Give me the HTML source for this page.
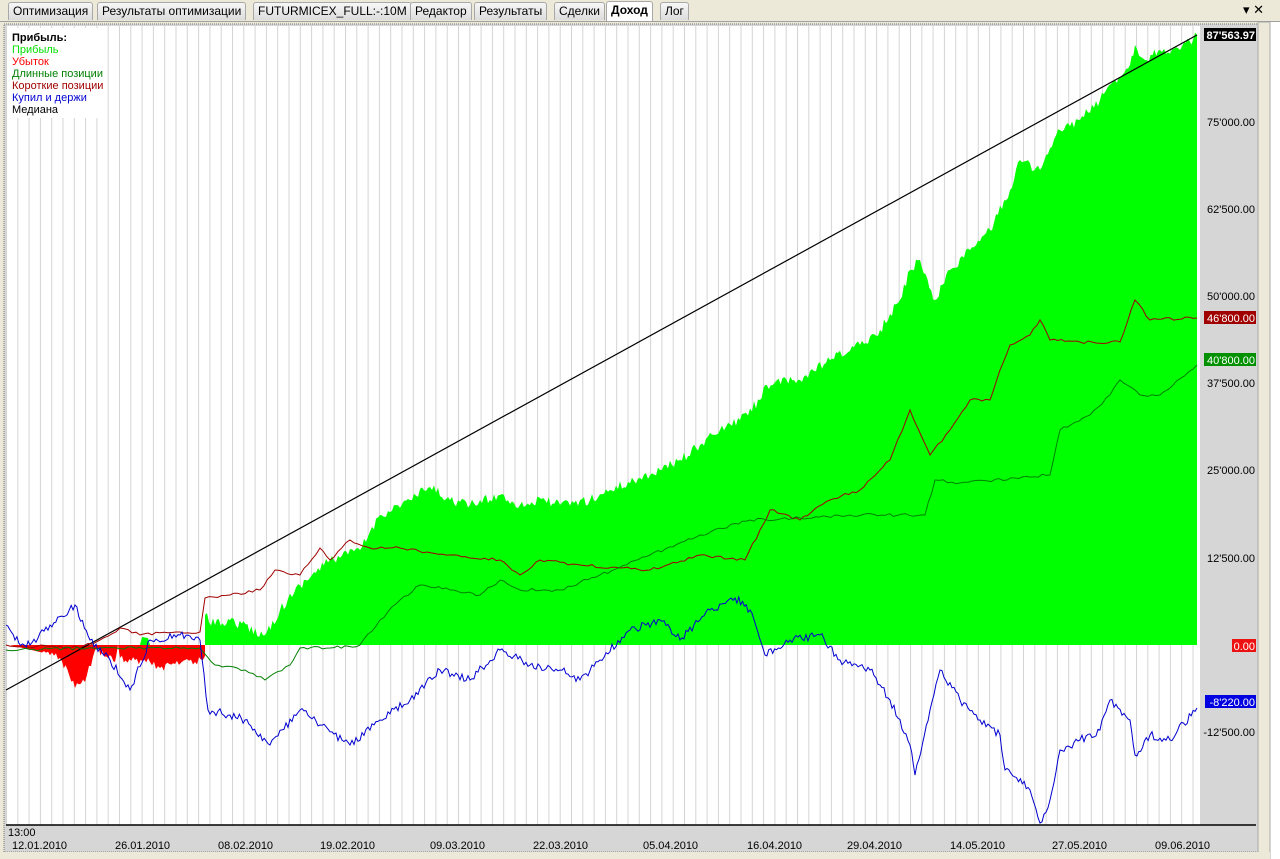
<!DOCTYPE html>
<html><head><meta charset="utf-8"><style>
body{margin:0;width:1280px;height:859px;overflow:hidden;background:#fff;font-family:"Liberation Sans",Tahoma,sans-serif}
.top{position:absolute;left:0;top:0;width:1280px;height:21px;background:#ece9d8;border-bottom:1px solid #a0a0a0}
.tab{position:absolute;top:2px;height:17px;font-size:12px;line-height:17px;padding:0 4px;border:1px solid #a8a8a8;border-bottom:none;background:linear-gradient(#f7f7f7,#dcdcdc);color:#000;border-radius:3px 3px 0 0}
.tab.a{background:#fff;font-weight:bold;top:1px;height:19px}
</style></head><body>
<div class="top">
<div class="tab" style="left:8px">Оптимизация</div>
<div class="tab" style="left:97px">Результаты оптимизации</div>
<div class="tab" style="left:253px">FUTURMICEX_FULL:-:10M</div>
<div class="tab" style="left:410px">Редактор</div>
<div class="tab" style="left:474px">Результаты</div>
<div class="tab" style="left:554px">Сделки</div>
<div class="tab a" style="left:606px">Доход</div>
<div class="tab" style="left:660px">Лог</div>
<div style="position:absolute;left:1243px;top:2px;font-size:13px">▾ ✕</div>
</div>
<svg style="position:absolute;left:0;top:22px" width="1280" height="837" viewBox="0 22 1280 837" font-family="Liberation Sans, sans-serif">
<defs><pattern id="g" x="6" y="0" width="11.3" height="10" patternUnits="userSpaceOnUse"><line x1="0.5" y1="0" x2="0.5" y2="10" stroke="#d4d4d4"/></pattern></defs>
<rect x="0" y="22" width="1270" height="837" fill="#ece9d8"/>
<rect x="4" y="24" width="1254" height="828" fill="#d6d6d6" stroke="#777" stroke-dasharray="1,1"/>
<rect x="6" y="26" width="1194" height="799" fill="#fff"/>
<rect x="6" y="26" width="1194" height="799" fill="url(#g)"/>
<rect x="8" y="28" width="98" height="90" fill="#fff"/>
<line x1="6" y1="825" x2="1256" y2="825" stroke="#000" stroke-width="1.5"/>
<rect x="1258" y="22" width="12" height="837" fill="#ece9d8" stroke="#aaa"/>
<rect x="0" y="852" width="1270" height="7" fill="#ece9d8"/>
<polygon id="pg" fill="#00ff00" points="205,645 205,615 215,625 230,620 265,635 280,610 300,585 330,560 360,550 380,515 410,500 430,487 450,500 470,505 500,495 520,505 545,500 560,505 590,500 610,490 640,478 660,470 680,460 700,445 720,430 740,420 760,400 765,385 800,380 830,360 860,345 880,330 900,300 910,270 920,260 935,300 950,270 970,250 990,230 1010,190 1020,160 1040,170 1060,130 1080,120 1100,100 1115,80 1130,65 1135,45 1145,60 1160,50 1180,50 1197,35 1197,645"/>
<polygon fill="#00ff00" points="140,645 142,637 148,638 150,645"/>
<polygon id="pr" fill="#ff0000" points="10,645 40,652 60,658 75,688 85,682 95,650 110,655 115,662 118,645 120,658 135,660 150,662 160,668 175,664 185,660 195,662 205,656 205,645"/>
<polyline fill="none" stroke="#000" stroke-width="1.2" points="6,690 1197,35"/>
<polyline id="ls" fill="none" stroke="#a00000" stroke-width="1" points="6,645 80,648 100,640 120,628 140,635 180,632 200,632 205,598 230,595 260,590 275,570 300,575 320,548 330,560 350,540 370,548 400,548 450,555 500,560 520,575 540,560 580,565 620,568 650,570 700,555 745,560 760,530 770,510 800,520 830,500 860,490 890,460 910,410 930,455 950,430 970,400 990,400 1000,370 1010,345 1030,335 1040,320 1050,340 1080,342 1120,342 1135,300 1150,320 1197,318"/>
<polyline id="ll" fill="none" stroke="#008000" stroke-width="1" points="6,650 100,648 200,648 215,665 245,670 265,680 290,665 300,648 330,648 360,645 380,620 400,600 420,585 450,590 480,595 500,580 520,590 560,590 600,575 650,555 700,535 750,520 800,518 850,515 925,515 935,480 960,483 1050,475 1060,430 1090,415 1110,395 1120,380 1140,395 1160,395 1197,365"/>
<polyline id="lb" fill="none" stroke="#0000d0" stroke-width="1" points="6,625 15,640 30,645 50,625 75,605 90,640 110,660 130,690 150,640 180,635 200,640 208,710 230,715 245,720 270,745 300,710 320,725 350,745 380,720 410,700 440,670 470,680 500,650 530,665 560,670 580,680 600,660 630,630 660,620 680,640 710,610 735,598 750,610 765,655 790,640 820,635 840,660 870,670 890,700 910,745 915,775 930,710 940,670 960,700 980,720 1000,735 1005,770 1030,790 1040,823 1050,800 1060,750 1080,740 1100,730 1110,700 1130,720 1135,755 1150,735 1170,740 1197,708"/>
<g font-size="11">
<text x="12" y="41" font-weight="bold">Прибыль:</text>
<text x="12" y="53" fill="#00e000">Прибыль</text>
<text x="12" y="65" fill="#ff0000">Убыток</text>
<text x="12" y="77" fill="#008000">Длинные позиции</text>
<text x="12" y="89" fill="#a00000">Короткие позиции</text>
<text x="12" y="101" fill="#0000d0">Купил и держи</text>
<text x="12" y="113">Медиана</text>
</g>
<g font-size="11" text-anchor="end">
<rect x="1204" y="28" width="52" height="13" fill="#000"/><text x="1255" y="39" fill="#fff" font-weight="bold">87'563.97</text>
<text x="1255" y="126">75'000.00</text>
<text x="1255" y="213">62'500.00</text>
<text x="1255" y="300">50'000.00</text>
<rect x="1204" y="311" width="52" height="13" fill="#a00000"/><text x="1255" y="322" fill="#fff">46'800.00</text>
<rect x="1204" y="353" width="52" height="13" fill="#009000"/><text x="1255" y="364" fill="#fff">40'800.00</text>
<text x="1255" y="387">37'500.00</text>
<text x="1255" y="474">25'000.00</text>
<text x="1255" y="562">12'500.00</text>
<rect x="1232" y="639" width="24" height="13" fill="#ee1111"/><text x="1255" y="650" fill="#fff">0.00</text>
<rect x="1205" y="695" width="51" height="13" fill="#0000e0"/><text x="1255" y="706" fill="#fff">-8'220.00</text>
<text x="1255" y="736">-12'500.00</text>
</g>
<g font-size="11">
<text x="8" y="836">13:00</text>
<text x="12" y="849">12.01.2010</text><text x="115" y="849">26.01.2010</text><text x="218" y="849">08.02.2010</text><text x="320" y="849">19.02.2010</text><text x="430" y="849">09.03.2010</text><text x="533" y="849">22.03.2010</text><text x="643" y="849">05.04.2010</text><text x="747" y="849">16.04.2010</text><text x="847" y="849">29.04.2010</text><text x="950" y="849">14.05.2010</text><text x="1052" y="849">27.05.2010</text><text x="1155" y="849">09.06.2010</text>
</g>
</svg>
<script>
(function(){
var s=12345;function r(){s=(s*16807)%2147483647;return s/2147483647-0.5;}
function rough(id,amp,step,closed){
 var el=document.getElementById(id);var p=el.getAttribute('points').trim().split(/\s+/).map(function(q){q=q.split(',');return[+q[0],+q[1]];});
 var st=closed?1:0,en=closed?p.length-1:p.length;var out=[];
 if(closed)out.push(p[0]);
 for(var i=st;i<en-1;i++){var a=p[i],b=p[i+1];var n=Math.max(1,Math.round((b[0]-a[0])/step));
  for(var k=0;k<n;k++){var t=k/n;var x=a[0]+(b[0]-a[0])*t,y=a[1]+(b[1]-a[1])*t;if(k>0)y+=r()*amp;out.push([x,y]);}}
 out.push(p[en-1]);if(closed)out.push(p[p.length-1]);
 el.setAttribute('points',out.map(function(q){return q[0].toFixed(1)+','+q[1].toFixed(1);}).join(' '));
}
rough('pg',10,2,true);rough('pr',8,2,true);rough('lb',8,2,false);rough('ls',3,4,false);rough('ll',3,4,false);
})();
</script>
</body></html>
